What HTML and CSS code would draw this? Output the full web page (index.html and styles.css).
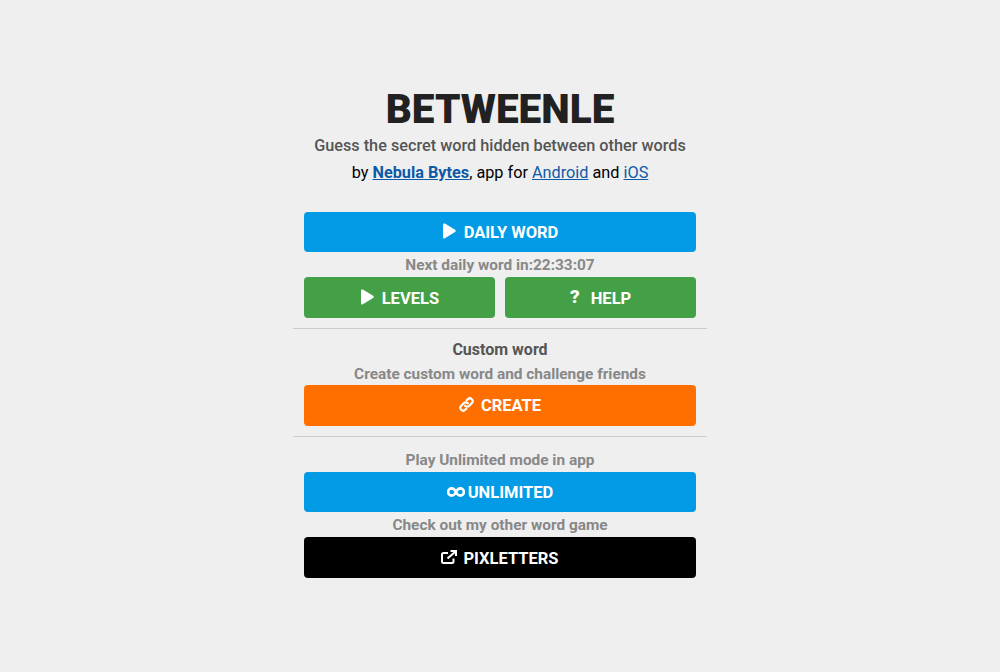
FILE: index.html
```html
<!DOCTYPE html>
<html lang="en">
<head>
<meta charset="utf-8">
<title>Betweenle</title>
<link rel="stylesheet" href="styles.css">
</head>
<body>
<main class="menu">
  <header class="head">
    <h1 class="title">BETWEENLE</h1>
    <p class="tagline">Guess the secret word hidden between other words</p>
    <p class="byline">by <a class="strong" href="#">Nebula Bytes</a>, app for <a href="#">Android</a> and <a href="#">iOS</a></p>
  </header>
  <section class="group">
    <a class="btn blue" href="#"><svg class="ico play" viewBox="0 0 14 16"><path d="M1 1.600C1 .6 2 .1 2.900.6l10.200 6.200c.8.5.8 1.700 0 2.200L2.900 15.300c-.9.5-1.900-.1-1.900-1.100z"/></svg>DAILY WORD</a>
    <p class="note">Next daily word in:22:33:07</p>
    <div class="pair">
      <a class="btn green" href="#"><svg class="ico play" viewBox="0 0 14 16"><path d="M1 1.600C1 .6 2 .1 2.900.6l10.200 6.200c.8.5.8 1.700 0 2.200L2.900 15.300c-.9.5-1.900-.1-1.900-1.100z"/></svg>LEVELS</a>
      <a class="btn green" href="#"><span class="q">?</span>HELP</a>
    </div>
  </section>
  <hr class="rule">
  <section class="group">
    <h2 class="sub">Custom word</h2>
    <p class="note snug">Create custom word and challenge friends</p>
    <a class="btn orange" href="#"><svg class="ico link" viewBox="0 0 16 16"><g fill="none" stroke="#fff" stroke-width="2.400" stroke-linecap="round"><path d="M6.600 9.400a3 3 0 0 0 4.300 0l2.700-2.700a3 3 0 0 0-4.300-4.300L8.200 3.500"/><path d="M9.400 6.600a3 3 0 0 0-4.300 0L2.400 9.300a3 3 0 0 0 4.300 4.300l1.100-1.100"/></g></svg>CREATE</a>
  </section>
  <hr class="rule">
  <section class="group last">
    <p class="note">Play Unlimited mode in app</p>
    <a class="btn blue" href="#"><svg class="ico inf" viewBox="0 0 18 10"><path fill="none" stroke="#fff" stroke-width="2.600" d="M9 5C7.800 2.600 6.500 1.400 4.700 1.400a3.600 3.600 0 0 0 0 7.200C6.500 8.600 7.800 7.400 9 5c1.200-2.400 2.500-3.600 4.300-3.600a3.600 3.600 0 0 1 0 7.200C11.500 8.600 10.200 7.400 9 5z"/></svg>UNLIMITED</a>
    <p class="note">Check out my other word game</p>
    <a class="btn black" href="#"><svg class="ico ext" viewBox="0 0 16 14"><g fill="none" stroke="#fff" stroke-width="2"><path d="M12.500 8.500v3c0 .9-.6 1.500-1.500 1.500H2.500c-.9 0-1.500-.6-1.500-1.500V4.500C1 3.600 1.600 3 2.500 3H7"/><path d="M6.500 8.500 14.500 1.500"/><path d="M9.500 1h5.500v5"/></g></svg>PIXLETTERS</a>
  </section>
</main>
</body>
</html>
```
FILE: styles.css
```css
* { box-sizing: border-box; }
html, body { margin: 0; height: 100%; }
body {
  background: #efefef;
  font-family: Roboto, "Liberation Sans", sans-serif;
  color: #000;
}
.menu {
  width: 414px;
  margin: 0 auto;
  padding-top: 86px;
}
.head { text-align: center; margin-bottom: 26.750px; }
.title {
  margin: 0;
  font-size: 40.500px;
  line-height: 47px;
  font-weight: 900;
  color: #212121;
}
.tagline {
  margin: 1px 0 0;
  font-size: 16.250px;
  line-height: 24px;
  font-weight: 500;
  color: #555;
}
.byline {
  margin: 3px 0 0;
  font-size: 16.250px;
  line-height: 24px;
}
.byline a { color: #0d5aa7; }
.byline a.strong { font-weight: 700; }
.group {
  padding: 0 11px;
  display: flex;
  flex-direction: column;
  text-align: center;
}
.group.last { padding-top: 1.250px; }
.btn {
  display: flex;
  align-items: center;
  justify-content: center;
  height: 40.500px;
  padding-top: 1px;
  border-radius: 4px;
  color: #fff;
  font-size: 16.500px;
  font-weight: 700;
  text-decoration: none;
}
.blue { background: #039be5; }
.green { background: #43a047; flex: 1; }
.orange { background: #ff6f00; }
.black { background: #000; }
.ico { display: block; fill: #fff; margin-right: 8px; }
.play { width: 14px; height: 16px; margin-top: -3px; }
.link { width: 15px; height: 15px; margin-top: -3px; margin-right: 7px; }
.inf { width: 18px; height: 10px; margin-top: -2px; margin-right: 3px; }
.ext { width: 16px; height: 14px; margin-top: -3px; margin-right: 6px; }
.q { font-size: 19px; font-weight: 900; margin-right: 11px; margin-top: -3px; }
.note {
  margin: 0;
  height: 25px;
  font-size: 15.400px;
  line-height: 26px;
  font-weight: 700;
  color: #888;
}
.note.snug { height: 23.250px; line-height: 24px; }
.sub {
  margin: 0;
  height: 24px;
  font-size: 16px;
  line-height: 24px;
  font-weight: 700;
  color: #555;
}
.pair { display: flex; gap: 10.500px; }
.rule {
  margin: 10px 0 9px;
  height: 1px;
  border: 0;
  background: #ccc;
}
```
